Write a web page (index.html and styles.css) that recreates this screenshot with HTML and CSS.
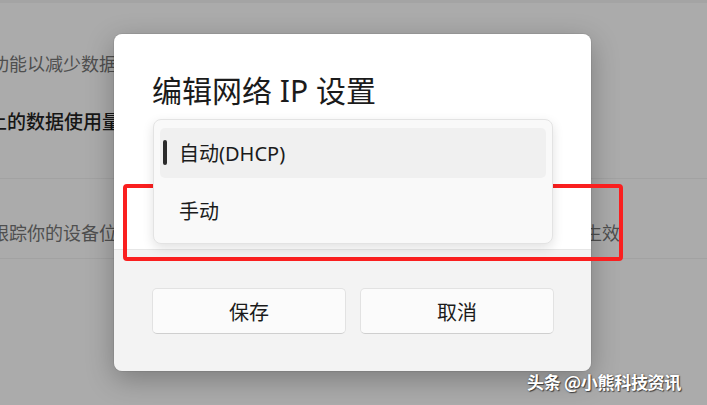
FILE: index.html
```html
<!DOCTYPE html>
<html lang="zh-CN">
<head>
<meta charset="utf-8">
<title>编辑网络 IP 设置</title>
<link rel="stylesheet" href="styles.css">
</head>
<body>
<div class="page">
  <div class="bg">
    <div class="bg-row row1"><span class="bg-text">功能以减少数据使用量，在按流量计费的网络上</span></div>
    <div class="bg-row row2"><span class="bg-text strong">上的数据使用量限制</span></div>
    <div class="bg-row row3">
      <span class="bg-text">跟踪你的设备位置，此设置将在重新连接后</span>
      <span class="bg-text right">重新连接后生效</span>
    </div>
  </div>

  <div class="dialog">
    <div class="dialog-body">
      <h1 class="title">编辑网络 IP 设置</h1>
      <div class="menu">
        <div class="menu-item selected"><span class="indicator"></span>自动(DHCP)</div>
        <div class="menu-item">手动</div>
      </div>
    </div>
    <div class="dialog-footer">
      <button class="btn">保存</button>
      <button class="btn">取消</button>
    </div>
  </div>

  <div class="highlight"></div>
  <div class="watermark">头条 @小熊科技资讯</div>
</div>
</body>
</html>
```

FILE: styles.css
```css
* { box-sizing: border-box; }
html, body { margin: 0; padding: 0; }
body {
  width: 707px;
  height: 405px;
  overflow: hidden;
  background: #ababab;
  font-family: "Noto Sans", "Noto Sans CJK SC", sans-serif;
}
.page {
  position: relative;
  width: 707px;
  height: 405px;
  overflow: hidden;
  background: #ababab;
}
.bg {
  display: flex;
  flex-direction: column;
  border-top: 3px solid #a4a4a4;
}
.bg-row {
  display: flex;
  align-items: flex-start;
  justify-content: space-between;
  white-space: nowrap;
}
.row1 { height: 88px; padding-top: 47px; }
.row2 { height: 87px; padding-top: 17px; }
.row3 {
  height: 81px;
  padding-top: 40px;
  border-top: 1px solid #a2a2a2;
  border-bottom: 1px solid #a2a2a2;
}
.bg-text {
  font-family: "Noto Sans CJK SC", sans-serif;
  font-size: 18px;
  line-height: 26px;
  color: #4f4f4f;
  margin-left: -9px;
}
.bg-text.strong {
  color: #161616;
  font-weight: 500;
  font-size: 19px;
  margin-left: -12px;
}
.bg-text.right {
  margin-left: 0;
  margin-right: 87px;
}

.dialog {
  position: absolute;
  left: 114px;
  top: 34px;
  width: 477px;
  height: 337px;
  border-radius: 8px;
  overflow: hidden;
  display: flex;
  flex-direction: column;
  box-shadow: 0 8px 28px rgba(0, 0, 0, 0.28), 0 0 0 1px rgba(0, 0, 0, 0.06);
}
.dialog-body {
  background: #ffffff;
  height: 215px;
  padding: 38px 37px 0 38px;
  display: flex;
  flex-direction: column;
}
.title {
  margin: 0;
  font-family: "Noto Sans", "Noto Sans CJK SC", sans-serif;
  font-weight: 400;
  font-size: 30px;
  line-height: 38px;
  color: #1b1b1b;
}
.menu {
  margin-top: 9px;
  margin-left: 1px;
  width: 400px;
  height: 125px;
  background: #f9f9f9;
  border: 1px solid #e3e3e3;
  border-radius: 8px;
  box-shadow: 0 4px 12px rgba(0, 0, 0, 0.12);
  padding: 8px 6px;
  display: flex;
  flex-direction: column;
  gap: 8px;
  position: relative;
  z-index: 2;
}
.menu-item {
  height: 50px;
  border-radius: 5px;
  display: flex;
  align-items: center;
  padding-left: 19px;
  font-size: 20px;
  color: #1b1b1b;
  position: relative;
}
.menu-item.selected { background: #f0f0f0; }
.indicator {
  position: absolute;
  left: 3px;
  top: 12px;
  width: 4px;
  height: 25px;
  border-radius: 2px;
  background: #2b2b2b;
}
.dialog-footer {
  flex: 1;
  background: #f3f3f3;
  border-top: 1px solid #e6e6e6;
  padding: 38px 37px 0 38px;
  display: flex;
  gap: 14px;
  align-items: flex-start;
}
.btn {
  width: 194px;
  height: 46px;
  background: #fbfbfb;
  border: 1px solid #e2e2e2;
  border-bottom-color: #cfcfcf;
  border-radius: 5px;
  font-family: "Noto Sans CJK SC", sans-serif;
  font-size: 20px;
  color: #1b1b1b;
  padding: 0;
}

.highlight {
  position: absolute;
  left: 123px;
  top: 184px;
  width: 500px;
  height: 77px;
  border: 4px solid #fa1f1f;
  border-radius: 4px;
}
.watermark {
  position: absolute;
  left: 527px;
  top: 369px;
  font-family: "Noto Sans CJK SC", sans-serif;
  font-size: 17px;
  font-weight: 700;
  color: #ffffff;
  white-space: nowrap;
  letter-spacing: -0.3px;
  text-shadow: 1px 1px 1px rgba(0, 0, 0, 0.6), 0 0 2px rgba(0, 0, 0, 0.35);
}
```
